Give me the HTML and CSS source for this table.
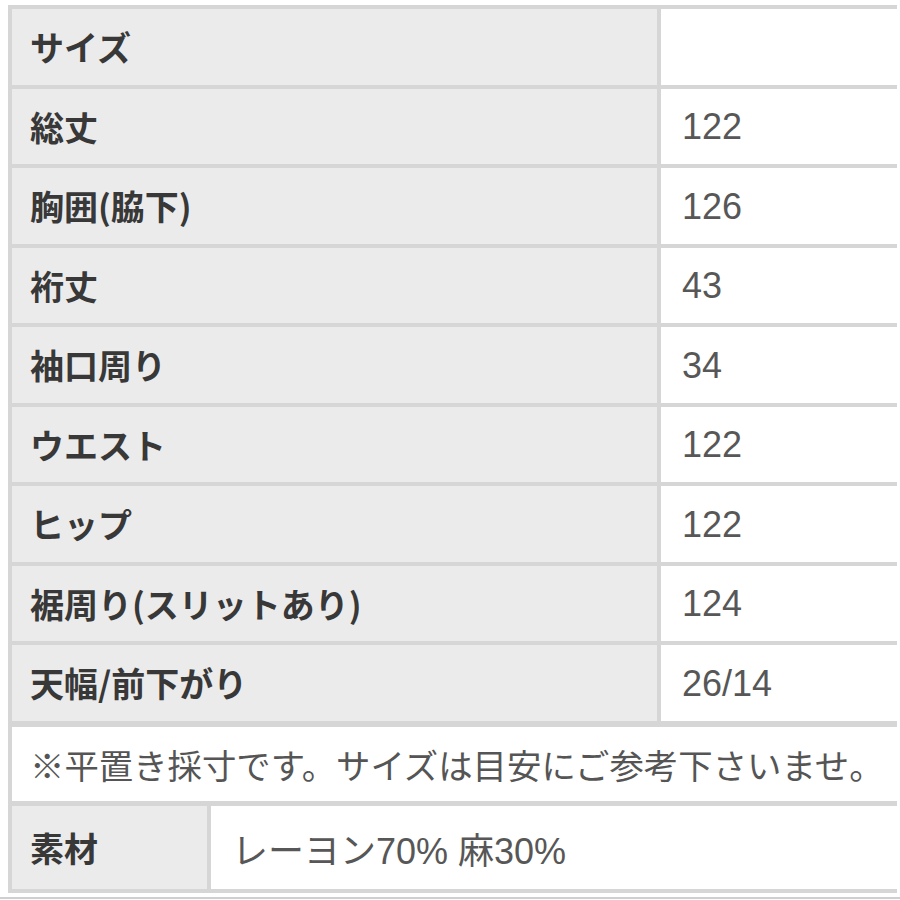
FILE: index.html
```html
<!DOCTYPE html>
<html lang="ja">
<head>
<meta charset="utf-8">
<title>サイズ表</title>
<link rel="stylesheet" href="styles.css">
</head>
<body>
<div class="sheet">
  <div class="row"><div class="label">サイズ</div><div class="value"></div></div>
  <div class="row"><div class="label">総丈</div><div class="value">122</div></div>
  <div class="row"><div class="label">胸囲(脇下)</div><div class="value">126</div></div>
  <div class="row"><div class="label">裄丈</div><div class="value">43</div></div>
  <div class="row"><div class="label">袖口周り</div><div class="value">34</div></div>
  <div class="row"><div class="label">ウエスト</div><div class="value">122</div></div>
  <div class="row"><div class="label">ヒップ</div><div class="value">122</div></div>
  <div class="row"><div class="label">裾周り(スリットあり)</div><div class="value">124</div></div>
  <div class="row"><div class="label">天幅/前下がり</div><div class="value">26/14</div></div>
  <div class="note">※平置き採寸です。サイズは目安にご参考下さいませ。</div>
  <div class="row material"><div class="label">素材</div><div class="value">レーヨン70% 麻30%</div></div>
</div>
<div class="rule"></div>
</body>
</html>
```
FILE: styles.css
```css
html, body {
  margin: 0;
  padding: 0;
  background: #ffffff;
  font-family: "Noto Sans CJK JP", "Noto Sans", sans-serif;
}

.sheet {
  margin: 5px 0 0 8px;
  width: 889px;
  box-sizing: border-box;
  background: #d6d6d6;
  padding: 4px 0 4px 4px;
  display: flex;
  flex-direction: column;
  gap: 4px;
}

.row {
  display: grid;
  grid-template-columns: 645px 1fr;
  gap: 4px;
  height: 75.5px;
}

.label {
  background: #ebebeb;
  color: #383838;
  font-weight: 700;
  font-size: 34px;
  padding-left: 18px;
  display: flex;
  align-items: center;
  white-space: nowrap;
}

.value {
  background: #ffffff;
  color: #575757;
  font-family: "Liberation Sans", "Noto Sans CJK JP", sans-serif;
  font-size: 36px;
  padding-left: 21px;
  padding-top: 2px;
  display: flex;
  align-items: center;
  white-space: nowrap;
}

.note {
  background: #ffffff;
  color: #555555;
  font-size: 34.4px;
  height: 74px;
  margin: 2px 0 1px;
  padding-left: 18px;
  display: flex;
  align-items: center;
  white-space: nowrap;
  overflow: hidden;
}

.material {
  grid-template-columns: 195px 1fr;
  height: 83px;
}

.rule {
  margin-top: 4px;
  height: 2px;
  background: #cfcfcf;
}
```
